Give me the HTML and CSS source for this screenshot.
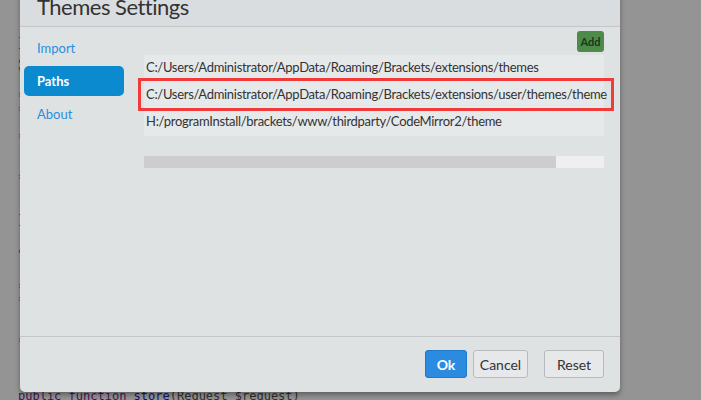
FILE: index.html
```html
<!DOCTYPE html>
<html>
<head>
<meta charset="utf-8">
<link rel="stylesheet" href="styles.css">
</head>
<body>
<div class="editor">
<pre class="code"><span class="kw">}</span>
<span class="pl">/**</span>
<span class="or">v</span>

<span class="pl">*</span>
<span class="pl">*</span>

<span class="pl">*</span>


<span class="pl">*</span>


<span class="kw">}</span>

<span class="pl">/**</span>


<span class="pl">*</span>
<span class="pl">*</span>


<span class="pl">*</span>



<span class="kw">public function</span> <span class="fn">store</span><span class="pl">(Request $request)</span></pre>
</div>
<div class="overlay"></div>
<div class="dialog">
  <div class="dialog-header">
    <h1 class="title">Themes Settings</h1>
  </div>
  <div class="dialog-body">
    <nav class="sidebar">
      <a class="nav-item">Import</a>
      <a class="nav-item active">Paths</a>
      <a class="nav-item">About</a>
    </nav>
    <div class="content">
      <div class="toolbar"><button class="btn-add">Add</button></div>
      <ul class="paths">
        <li class="path">C:/Users/Administrator/AppData/Roaming/Brackets/extensions/themes</li>
        <li class="path marked">C:/Users/Administrator/AppData/Roaming/Brackets/extensions/user/themes/theme</li>
        <li class="path">H:/programInstall/brackets/www/thirdparty/CodeMirror2/theme</li>
      </ul>
      <div class="progress"><div class="progress-fill" style="width:89.6%"></div></div>
    </div>
  </div>
  <div class="dialog-footer">
    <button class="btn btn-primary">Ok</button>
    <button class="btn btn-cancel">Cancel</button>
    <button class="btn btn-reset">Reset</button>
  </div>
</div>
</body>
</html>
```
FILE: styles.css
```css
html, body {
  margin: 0;
  padding: 0;
}
body {
  width: 701px;
  height: 400px;
  overflow: hidden;
  position: relative;
  background: #fff;
  font-family: "Lato", "Liberation Sans", sans-serif;
}
.editor {
  height: 400px;
  display: flex;
  flex-direction: column;
  justify-content: flex-end;
  padding-left: 18px;
}
.code {
  margin: 0 0 -4px 0;
  font-family: "DejaVu Sans Mono", monospace;
  font-size: 12px;
  line-height: 13.6px;
  color: #333;
}
.kw { color: #7a1f9a; }
.fn { color: #1a1ad0; }
.pl { color: #555; }
.or { color: #c0620a; }
.overlay {
  position: absolute;
  inset: 0;
  background: rgba(0, 0, 0, 0.42);
}
.dialog {
  position: absolute;
  left: 20px;
  top: -20px;
  width: 600px;
  height: 412px;
  background: #dfe2e3;
  border-radius: 5px;
  box-shadow: 0 3px 5px rgba(0, 0, 0, 0.35);
  display: flex;
  flex-direction: column;
}
.dialog-header {
  height: 47px;
  box-sizing: border-box;
  background: #dadddf;
  border-bottom: 1px solid #c3c5c6;
  padding-left: 17px;
  display: flex;
  align-items: flex-end;
}
.title {
  margin: 0 0 6px 0;
  font-family: "Lato", sans-serif;
  font-weight: normal;
  font-size: 22px;
  letter-spacing: -0.5px;
  line-height: 26px;
  color: #333;
}
.dialog-body {
  flex: 1;
  display: flex;
}
.sidebar {
  width: 100px;
  padding: 6px 0 0 4px;
  display: flex;
  flex-direction: column;
  gap: 3px;
}
.nav-item {
  height: 30px;
  line-height: 31px;
  padding-left: 13px;
  border-radius: 5px;
  color: #2a8ee0;
  font-size: 13px;
}
.nav-item.active {
  background: #0b8ad0;
  color: #fff;
  font-weight: bold;
}
.content {
  margin-left: 20px;
  width: 460px;
  padding-top: 4px;
}
.toolbar {
  display: flex;
  justify-content: flex-end;
}
.btn-add {
  width: 27px;
  height: 21px;
  padding: 0;
  border: none;
  border-radius: 3px;
  background: #4c8c48;
  color: #1d351d;
  font-family: "Lato", sans-serif;
  font-weight: bold;
  font-size: 11px;
}
.paths {
  list-style: none;
  margin: 3px 0 0 0;
  padding: 0;
  background: #e6e9ea;
}
.path {
  height: 27px;
  line-height: 25px;
  padding-left: 2px;
  font-size: 13px;
  letter-spacing: -0.3px;
  color: #333;
  white-space: nowrap;
  position: relative;
}
.path.marked::after {
  content: "";
  position: absolute;
  left: -6px;
  right: -10px;
  top: -4px;
  bottom: -2px;
  border: 3px solid #f23a3a;
}
.progress {
  margin-top: 20px;
  height: 12px;
  background: #efefef;
}
.progress-fill {
  height: 100%;
  background: #cdcdcd;
}
.dialog-footer {
  height: 56px;
  box-sizing: border-box;
  border-top: 1px solid #c3c5c6;
  display: flex;
  justify-content: flex-end;
  align-items: flex-start;
  padding: 13px 16px 0 0;
  gap: 6px;
}
.btn {
  height: 28px;
  padding: 0;
  border: 1px solid #b8bbbd;
  border-radius: 3px;
  background: #e6e8e9;
  color: #333;
  font-family: "Lato", sans-serif;
  font-size: 14px;
  text-align: center;
}
.btn-primary {
  width: 42px;
  background: #2a8be0;
  border-color: #2077c4;
  color: #fff;
  font-weight: bold;
}
.btn-cancel {
  width: 55px;
  margin-right: 10px;
}
.btn-reset {
  width: 60px;
}
```
